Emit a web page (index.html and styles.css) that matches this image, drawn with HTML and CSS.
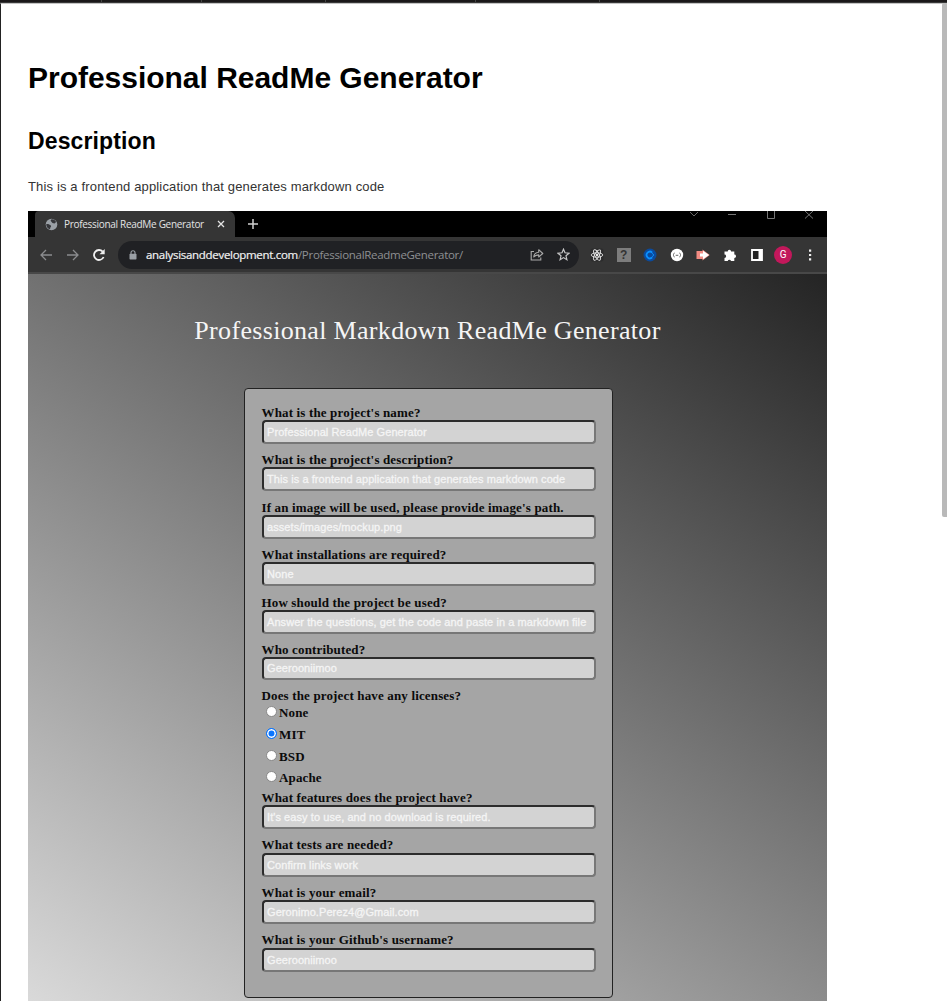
FILE: index.html
```html
<!DOCTYPE html>
<html lang="en">
<head>
<meta charset="utf-8">
<title>Professional ReadMe Generator</title>
<link rel="stylesheet" href="styles.css">
</head>
<body>
<div class="topbar"><i class="t1"></i><i class="t2"></i><i class="t3"></i><i class="t4"></i><i class="t5"></i></div>
<div class="scroll-thumb"></div>
<main class="preview">
  <h1 class="title">Professional ReadMe Generator</h1>
  <h2 class="subtitle">Description</h2>
  <p class="intro">This is a frontend application that generates markdown code</p>
  <section class="browser">
    <div class="tabstrip">
      <div class="tab">
        <svg class="globe" width="13" height="13" viewBox="0 0 13 13"><circle cx="6.5" cy="6.5" r="5.8" fill="#9aa0a6"/><path d="M1.300 6c1.700-.2 3 .3 3.900 1.100s1.200 1.300.5 2-.2 1.600-.9 2.100C2.500 10.500 1.100 8.300 1.300 6zM6.500 1.300c2-.2 3.900 1 4.600 2.700L9.500 5.400 7.500 5 6.200 3.600 5.600 2.400z" fill="#35363a"/></svg>
        <span class="tab-name">Professional ReadMe Generator</span>
        <svg class="tab-x" width="8" height="8" viewBox="0 0 8 8"><path d="M1 1l6 6M7 1L1 7" stroke="#e4e4e4" stroke-width="1.300"/></svg>
      </div>
      <svg class="plus" width="12" height="12" viewBox="0 0 12 12"><path d="M6 1v10M1 6h10" stroke="#d0d0d0" stroke-width="1.500"/></svg>
      <div class="winbtns">
        <svg width="10" height="8" viewBox="0 0 10 8"><path d="M1 1l4 4 4-4" fill="none" stroke="#666"/></svg>
        <svg width="10" height="8" viewBox="0 0 10 8"><path d="M1 3.500h8" stroke="#777"/></svg>
        <svg width="10" height="8" viewBox="0 0 10 8"><path d="M1.500 0v7.500h7V0" fill="none" stroke="#777"/></svg>
        <svg width="10" height="8" viewBox="0 0 10 8"><path d="M1 0l8 7.500M9 0L1 7.500" stroke="#777"/></svg>
      </div>
    </div>
    <div class="toolbar">
      <div class="nav">
        <svg width="14" height="14" viewBox="0 0 14 14"><path d="M13 7H2M7 2L2 7l5 5" fill="none" stroke="#8b8c8e" stroke-width="1.300"/></svg>
        <svg width="14" height="14" viewBox="0 0 14 14"><path d="M1 7h11M7 2l5 5-5 5" fill="none" stroke="#8b8c8e" stroke-width="1.300"/></svg>
        <svg width="14" height="14" viewBox="0 0 14 14"><path d="M11.600 9A5 5 0 1 1 10.700 3.600" fill="none" stroke="#f0f0f0" stroke-width="1.800"/><path d="M12.700 1v5.200H7.500z" fill="#f0f0f0"/></svg>
      </div>
      <div class="omnibox">
        <svg class="lock" width="8" height="10" viewBox="0 0 8 10"><path d="M2 4V2.800a2 2 0 0 1 4 0V4" fill="none" stroke="#9aa0a6" stroke-width="1.100"/><rect x=".5" y="3.700" width="7" height="5.800" rx=".7" fill="#9aa0a6"/></svg>
        <span class="url"><b class="host">analysisanddevelopment.com</b><span class="path">/ProfessionalReadmeGenerator/</span></span>
        <svg class="share" width="14" height="13" viewBox="0 0 14 13"><path d="M4 3.500H1.200V12h9.600V9.500" fill="none" stroke="#aaa" stroke-width="1.100"/><path d="M3.800 9C4 6 6 4.500 8.700 4.300V1.700L12.800 5.500 8.700 9V6.900C6.500 6.900 5 7.600 3.800 9z" fill="none" stroke="#aaa" stroke-width="1.100" stroke-linejoin="round"/></svg>
        <svg class="star" width="13" height="13" viewBox="0 0 13 13"><path d="M6.500 1.200l1.500 3.600 4 .4-3 2.600.9 3.900-3.400-2.100-3.400 2.100L4 7.800 1 5.200l4-.4z" fill="none" stroke="#c8c8c8" stroke-width="1.200"/></svg>
      </div>
      <div class="exts">
        <svg width="14" height="14" viewBox="0 0 14 14"><rect x=".5" y=".5" width="13" height="13" rx="2" fill="#2c2c2d"/><g fill="none" stroke="#e6e6e6" stroke-width=".9"><ellipse cx="7" cy="7" rx="5.800" ry="2.200"/><ellipse cx="7" cy="7" rx="5.800" ry="2.200" transform="rotate(60 7 7)"/><ellipse cx="7" cy="7" rx="5.800" ry="2.200" transform="rotate(120 7 7)"/></g><circle cx="7" cy="7" r="1.200" fill="#eee"/></svg>
        <span class="question">?</span>
        <svg width="14" height="14" viewBox="0 0 14 14"><circle cx="7" cy="7" r="6.500" fill="#0b4a9c"/><path d="M9.200 4.600a3.300 3.300 0 1 0 0 4.800" fill="none" stroke="#0a90ff" stroke-width="1.800"/><path d="M9.300 5.200l1.400 1.800-1.400 1.800" fill="none" stroke="#0a90ff"/></svg>
        <svg width="14" height="14" viewBox="0 0 14 14"><circle cx="7" cy="7" r="6.200" fill="#fff"/><path d="M4.500 5C3.500 5 4 6.500 3 7c1 .5.500 2 1.500 2M9.500 5c1 0 .5 1.500 1.500 2-1 .5-.5 2-1.500 2M5.700 7.300h2.600" fill="none" stroke="#555" stroke-width=".9"/></svg>
        <svg width="14" height="14" viewBox="0 0 14 14"><path d="M.5 3h6V1.500L13.700 7 6.500 12.500V11h-6z" fill="#f28b82"/><path d="M4 5.500h3V2.800L13 7l-6 4.200V8.500H4z" fill="#fff"/></svg>
        <svg width="14" height="14" viewBox="0 0 14 14"><path d="M1.500 3.500h3.200a1.700 1.700 0 1 1 3.400 0h3.200v3.100a1.750 1.750 0 1 1 0 3.500V13H8a1.700 1.700 0 0 0-3.300 0H1.500V9.900a1.650 1.650 0 0 0 0-3.300z" fill="#fff"/></svg>
        <svg width="14" height="14" viewBox="0 0 14 14"><path d="M2 2h10v10H2z" fill="#222" stroke="#fff" stroke-width="1.800"/><path d="M8.500 2H12v10H8.500z" fill="#fff"/></svg>
        <span class="avatar">G</span>
        <svg width="14" height="14" viewBox="0 0 14 14" fill="#eee"><path d="M6 1.500h2.200v2.200H6zM6 5.900h2.200v2.200H6zM6 10.300h2.200v2.200H6z"/></svg>
      </div>
    </div>
    <div class="page">
      <div class="page-title">Professional Markdown ReadMe Generator</div>
      <form class="card">
        <div class="field"><label>What is the project's name?</label><div class="input">Professional ReadMe Generator</div></div>
        <div class="field"><label>What is the project's description?</label><div class="input">This is a frontend application that generates markdown code</div></div>
        <div class="field"><label>If an image will be used, please provide image's path.</label><div class="input">assets/images/mockup.png</div></div>
        <div class="field"><label>What installations are required?</label><div class="input">None</div></div>
        <div class="field"><label>How should the project be used?</label><div class="input">Answer the questions, get the code and paste in a markdown file</div></div>
        <div class="field short"><label>Who contributed?</label><div class="input">Geerooniimoo</div></div>
        <div class="licenses">
          <label>Does the project have any licenses?</label>
          <div class="option"><i class="radio"></i>None</div>
          <div class="option"><i class="radio on"></i>MIT</div>
          <div class="option"><i class="radio"></i>BSD</div>
          <div class="option"><i class="radio"></i>Apache</div>
        </div>
        <div class="field"><label>What features does the project have?</label><div class="input">It's easy to use, and no download is required.</div></div>
        <div class="field"><label>What tests are needed?</label><div class="input">Confirm links work</div></div>
        <div class="field"><label>What is your email?</label><div class="input">Geronimo.Perez4@Gmail.com</div></div>
        <div class="field"><label>What is your Github's username?</label><div class="input">Geerooniimoo</div></div>
      </form>
    </div>
  </section>
</main>
</body>
</html>
```
FILE: styles.css
```css
* { box-sizing: border-box; }
html, body { margin: 0; height: 1001px; overflow: hidden; background: #fff; }
svg { display: block; flex: none; }
.topbar { height: 3px; background: #1a1819; border-bottom: 1px solid #383838; display: flex; }
.topbar i { border-right: 1px solid #444; flex: none; }
.t1 { width: 102px; }
.t2 { width: 100px; }
.t3 { width: 124px; }
.t4 { width: 150px; }
.t5 { width: 124px; }
.scroll-thumb { position: absolute; right: 0; top: 3px; width: 5px; height: 514px; background: #b9b9b9; border-radius: 2px 0 0 2px; }
.preview { height: 998px; border-left: 1px solid #222; border-top: 1px solid #c4c4c4; padding: 56px 0 0 27px; font-family: "Liberation Sans", Arial, sans-serif; overflow: hidden; }
.title { margin: 0; font-size: 30px; line-height: 36px; letter-spacing: -.02px; color: #000; white-space: nowrap; }
.subtitle { margin: 31px 0 0; font-size: 23px; line-height: 28px; letter-spacing: .12px; color: #000; }
.intro { margin: 22px 0 0; font-size: 13px; line-height: 20px; letter-spacing: .15px; color: #333; }
.browser { margin-top: 14px; width: 799px; height: 800px; background: #000; }
.tabstrip { height: 26px; display: flex; position: relative; padding-left: 7px; }
.tab { width: 200px; height: 26px; background: #353535; border-radius: 4px 7px 0 0; display: flex; align-items: center; padding-left: 10px; }
.tab-name { width: 140px; margin: -1px 0 0 6px; font: 10px/16px "Open Sans", "Noto Sans", sans-serif; letter-spacing: -.3px; color: #e4e4e4; white-space: nowrap; }
.tab-x { margin-left: 13px; }
.plus { margin: 7px 0 0 12px; }
.winbtns { margin-left: auto; padding-right: 13px; display: flex; gap: 28.400px; }
.toolbar { height: 37px; background: #353535; border-bottom: 2px solid #484848; display: flex; align-items: center; padding-left: 11px; }
.nav { display: flex; gap: 12.700px; width: 79px; }
.omnibox { width: 461px; height: 28px; border-radius: 14px; background: #202124; display: flex; align-items: center; padding-left: 11px; }
.url { margin-left: 9px; width: 383px; font: 11.500px/18px "Open Sans", "Noto Sans", sans-serif; letter-spacing: -.3px; white-space: nowrap; color: #8e9093; }
.host { font-weight: 400; color: #f1f1f1; -webkit-text-stroke: .2px #f1f1f1; }
.share { margin-left: 1px; }
.star { margin-left: 13px; }
.exts { display: flex; align-items: center; gap: 12.600px; margin-left: 11px; }
.question { width: 14px; height: 14px; background: #7d7d7d; color: #333; font: bold 12px/14px "Liberation Sans", sans-serif; text-align: center; }
.avatar { width: 18px; height: 18px; margin: 0 -2px; border-radius: 50%; background: #c2185b; color: #fff; font: 10px/18px Roboto, sans-serif; text-align: center; }
.page { height: 760px; padding-top: 38px; background: linear-gradient(34deg, #dedede 0, #242424 100%); }
.page-title { font: 26px/38px "Liberation Serif", serif; letter-spacing: .32px; text-align: center; color: #f5f5f5; white-space: nowrap; }
.card { width: 369px; height: 610px; margin: 38px 0 0 216px; border: 1px solid #222; border-radius: 4px; background: #a5a5a5; padding: 15.600px 16.500px 0 16.500px; }
.field { height: 47.500px; }
.field.short { height: 46.300px; }
.card label, .option { display: block; font: bold 13px/15px "Liberation Serif", serif; letter-spacing: .15px; color: #0b0b0b; white-space: nowrap; }
.card label { margin-bottom: .400px; }
.input { height: 24px; border: 2px solid; border-color: #2c2c2c #777 #777 #2c2c2c; border-radius: 4px; background: #d3d3d3; padding-left: 3.500px; font: 11px/20px "Liberation Sans", sans-serif; letter-spacing: .07px; -webkit-text-stroke: .3px #f5f5f5; color: #f5f5f5; white-space: nowrap; overflow: hidden; }
.short label { margin-top: -.500px; }
.short .input { height: 23px; line-height: 19px; }
.licenses { height: 102px; }
.option { display: flex; align-items: center; height: 21.700px; line-height: 19px; padding: 0 0 3px 4px; }
.option:nth-of-type(4) { margin-top: -.200px; }
.radio { width: 11px; height: 11px; margin: -2px 2.500px 0 0; border-radius: 50%; background: #fff; border: 1px solid #888; }
.radio.on { border: 1px solid #0a75ff; background: #0a75ff; box-shadow: inset 0 0 0 1.500px #fff; }
```
